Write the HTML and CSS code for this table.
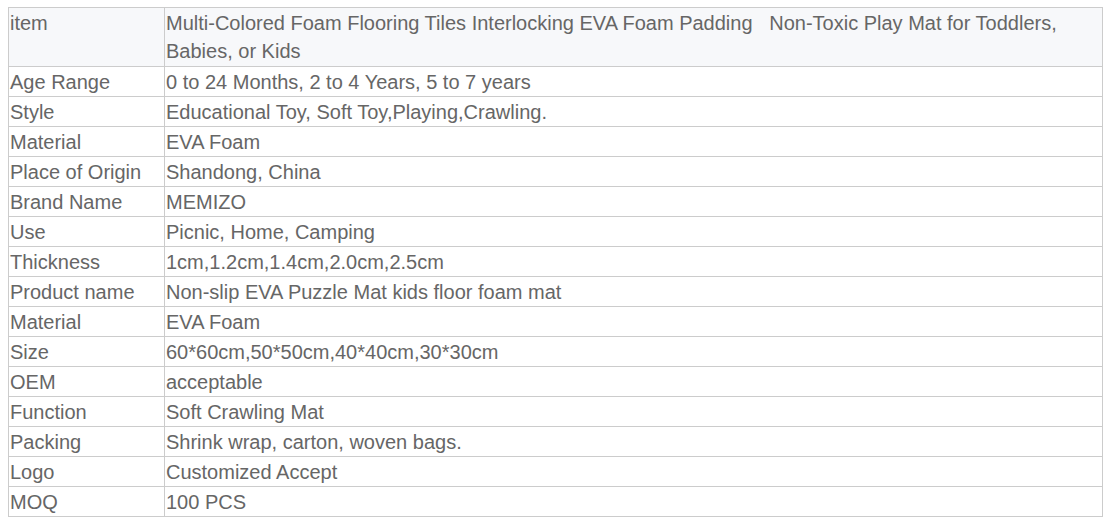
FILE: index.html
```html
<!DOCTYPE html>
<html>
<head>
<meta charset="utf-8">
<link rel="stylesheet" href="styles.css">
</head>
<body>
<table class="spec">
<colgroup><col class="c1"><col class="c2"></colgroup>
<tr class="head"><td>item</td><td>Multi-Colored Foam Flooring Tiles Interlocking EVA Foam Padding&nbsp;&nbsp; Non-Toxic Play Mat for Toddlers, Babies, or Kids</td></tr>
<tr><td>Age Range</td><td>0 to 24 Months, 2 to 4 Years, 5 to 7 years</td></tr>
<tr><td>Style</td><td>Educational Toy, Soft Toy,Playing,Crawling.</td></tr>
<tr><td>Material</td><td>EVA Foam</td></tr>
<tr><td>Place of Origin</td><td>Shandong, China</td></tr>
<tr><td>Brand Name</td><td>MEMIZO</td></tr>
<tr><td>Use</td><td>Picnic, Home, Camping</td></tr>
<tr><td>Thickness</td><td>1cm,1.2cm,1.4cm,2.0cm,2.5cm</td></tr>
<tr><td>Product name</td><td>Non-slip EVA Puzzle Mat kids floor foam mat</td></tr>
<tr><td>Material</td><td>EVA Foam</td></tr>
<tr><td>Size</td><td>60*60cm,50*50cm,40*40cm,30*30cm</td></tr>
<tr><td>OEM</td><td>acceptable</td></tr>
<tr><td>Function</td><td>Soft Crawling Mat</td></tr>
<tr><td>Packing</td><td>Shrink wrap, carton, woven bags.</td></tr>
<tr><td>Logo</td><td>Customized Accept</td></tr>
<tr><td>MOQ</td><td>100 PCS</td></tr>
</table>
</body>
</html>
```
FILE: styles.css
```css
body {
  margin: 7px 8px;
  background: #fff;
  font-family: "Liberation Sans", Arial, sans-serif;
}
.spec {
  border-collapse: collapse;
  width: 1095px;
  font-size: 20px;
  color: #666;
}
.c1 { width: 156px; }
.spec td {
  border: 1px solid #ccc;
  padding: 1px 1px 0;
  line-height: 28px;
  vertical-align: top;
}
.head td {
  height: 57px;
  background: #f7f8fa;
}
```
